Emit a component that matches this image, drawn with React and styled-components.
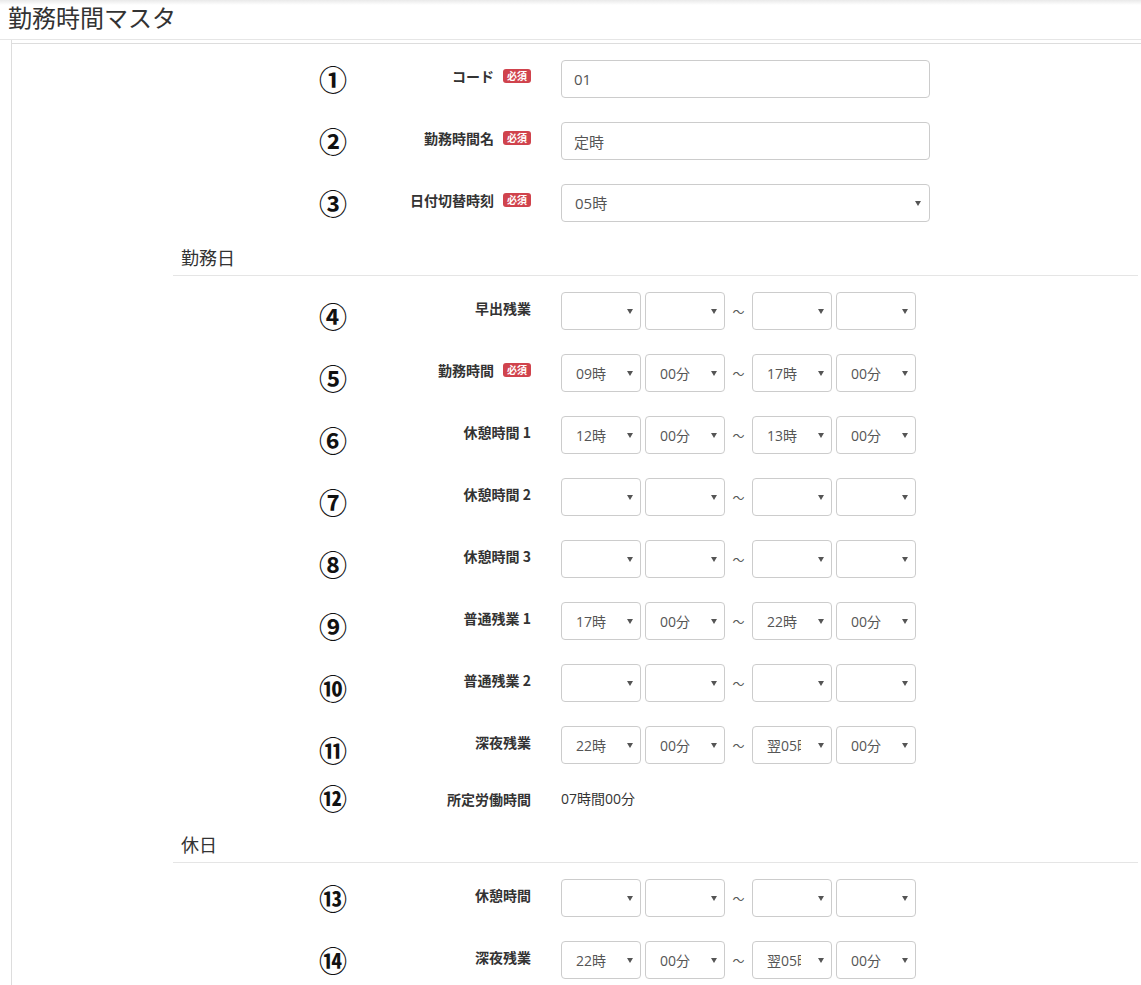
import React from 'react'
import styled, {createGlobalStyle} from 'styled-components'


const GlobalStyle = createGlobalStyle`
  body {
    margin: 0;
    background: #fff;
    color: #333;
    font-family: "Open Sans", "Noto Sans CJK JP", sans-serif;
  }
`

const Header = styled.header`
  height: 39px;
  padding-left: 8px;
  border-bottom: 1px solid #e6e6e6;
  background: linear-gradient(#e9e9e9 0, #fff 5px);
  display: flex;
  align-items: center;
`

const Title = styled.h1`
  margin: 0;
  font-family: "Noto Sans CJK JP", sans-serif;
  font-size: 24px;
  font-weight: 400;
  color: #333;
  line-height: 1;
  padding-bottom: 6px;
`

const Main = styled.main`
  margin-left: 11px;
  padding-top: 3px;
  border-left: 1px solid #ddd;
`

const Panel = styled.div`
  border-top: 1px solid #ddd;
  padding: 16px 0 12px;
`

const Row = styled.div`
  display: grid;
  grid-template-columns: 66px 165px 1fr;
  align-items: ${p => p.$static ? 'center' : 'start'};
  height: ${p => p.$static ? '21px' : '38px'};
  padding-left: 288px;
  margin-bottom: 24px;
  &:last-child { margin-bottom: 0; }
`

const Num = styled.div`
  align-self: center;
  text-align: center;
  font-family: "Noto Sans CJK JP", sans-serif;
  font-size: 28px;
  font-weight: 700;
  line-height: ${p => p.$static ? '21px' : '1'};
  color: #111;
  transform: translateY(${p => p.$shift || 0}px);
`

const Label = styled.label`
  display: flex;
  justify-content: flex-end;
  align-items: center;
  gap: 9px;
  padding-top: ${p => p.$static ? '0' : '7px'};
  font-family: "Noto Sans CJK JP", sans-serif;
  font-size: 14px;
  font-weight: 700;
  line-height: 18px;
  color: #333;
  white-space: nowrap;
`

const Badge = styled.span`
  display: inline-block;
  padding: 1px 4px;
  border-radius: 3px;
  background: #d0434d;
  color: #fff;
  font-size: 10px;
  font-weight: 700;
  line-height: 12px;
`

const Control = styled.div`
  padding-left: 30px;
  display: flex;
  align-items: center;
  gap: 4px;
`

const TextInput = styled.input`
  box-sizing: border-box;
  width: 369px;
  height: 38px;
  padding: 6px 12px;
  border: 1px solid #ccc;
  border-radius: 4px;
  font-family: "Open Sans", "Noto Sans CJK JP", sans-serif;
  font-size: 15px;
  color: #555;
  outline: none;
`

const SelectWrap = styled.div`
  position: relative;
  width: ${p => p.$wide ? '369px' : '80px'};
  height: 38px;
  &::after {
    content: "";
    position: absolute;
    right: ${p => p.$wide ? '9px' : '8px'};
    top: 17px;
    border-left: 3px solid transparent;
    border-right: 3px solid transparent;
    border-top: 5px solid #555;
    pointer-events: none;
  }
`

const Select = styled.select`
  appearance: none;
  box-sizing: border-box;
  width: 100%;
  height: 100%;
  margin: 0;
  padding: 0 ${p => p.$wide ? '24px' : '30px'} 0 ${p => p.$wide ? '13px' : '14px'};
  border: 1px solid #ccc;
  border-radius: 4px;
  background: #fff;
  font-family: "Open Sans", "Noto Sans CJK JP", sans-serif;
  font-size: ${p => p.$wide ? '15px' : '14px'};
  color: #555;
  outline: none;
`

const Tilde = styled.span`
  width: 19px;
  text-align: center;
  font-family: "Noto Sans CJK JP", sans-serif;
  font-size: 12px;
  color: #555;
`

const StaticText = styled.div`
  padding-left: 30px;
  font-family: "Open Sans", "Noto Sans CJK JP", sans-serif;
  font-size: 14px;
  line-height: 21px;
  color: #333;
`

const Legend = styled.div`
  margin: 20px 3px 16px 161px;
  padding: 0 0 7px 8px;
  border-bottom: 1px solid #e5e5e5;
  font-family: "Noto Sans CJK JP", sans-serif;
  font-size: 18px;
  line-height: 22px;
  color: #333;
`

function Drop({value, wide}) {
  return <SelectWrap $wide={wide}>
    <Select $wide={wide} defaultValue={value}>
      <option value=""></option>
      {value && <option value={value}>{value}</option>}
    </Select>
  </SelectWrap>
}

function TimeRange({values}) {
  return <Control>
    <Drop value={values[0]}/>
    <Drop value={values[1]}/>
    <Tilde>～</Tilde>
    <Drop value={values[2]}/>
    <Drop value={values[3]}/>
  </Control>
}

const empty = ['', '', '', '']

const workdayRows = [
  {n: '④', label: '早出残業', values: empty},
  {n: '⑤', label: '勤務時間', required: true, values: ['09時', '00分', '17時', '00分']},
  {n: '⑥', label: '休憩時間 1', values: ['12時', '00分', '13時', '00分']},
  {n: '⑦', label: '休憩時間 2', values: empty},
  {n: '⑧', label: '休憩時間 3', values: empty},
  {n: '⑨', label: '普通残業 1', values: ['17時', '00分', '22時', '00分']},
  {n: '⑩', label: '普通残業 2', values: empty},
  {n: '⑪', label: '深夜残業', values: ['22時', '00分', '翌05時', '00分']},
]

const holidayRows = [
  {n: '⑬', label: '休憩時間', values: empty},
  {n: '⑭', label: '深夜残業', values: ['22時', '00分', '翌05時', '00分']},
]

function FieldLabel({text, required}) {
  return <Label>
    {text}
    {required && <Badge>必須</Badge>}
  </Label>
}

export default function App() {
  return <>
    <GlobalStyle/>
    <Header>
      <Title>勤務時間マスタ</Title>
    </Header>
    <Main>
      <Panel>
        <Row>
          <Num>①</Num>
          <FieldLabel text="コード" required/>
          <Control><TextInput defaultValue="01"/></Control>
        </Row>
        <Row>
          <Num>②</Num>
          <FieldLabel text="勤務時間名" required/>
          <Control><TextInput defaultValue="定時"/></Control>
        </Row>
        <Row>
          <Num>③</Num>
          <FieldLabel text="日付切替時刻" required/>
          <Control><Drop wide value="05時"/></Control>
        </Row>

        <Legend>勤務日</Legend>
        {workdayRows.map(r =>
          <Row key={r.n}>
            <Num $shift={5}>{r.n}</Num>
            <FieldLabel text={r.label} required={r.required}/>
            <TimeRange values={r.values}/>
          </Row>
        )}
        <Row $static>
          <Num $static>⑫</Num>
          <Label $static>所定労働時間</Label>
          <StaticText>07時間00分</StaticText>
        </Row>

        <Legend>休日</Legend>
        {holidayRows.map(r =>
          <Row key={r.n}>
            <Num>{r.n}</Num>
            <FieldLabel text={r.label}/>
            <TimeRange values={r.values}/>
          </Row>
        )}
      </Panel>
    </Main>
  </>
}
